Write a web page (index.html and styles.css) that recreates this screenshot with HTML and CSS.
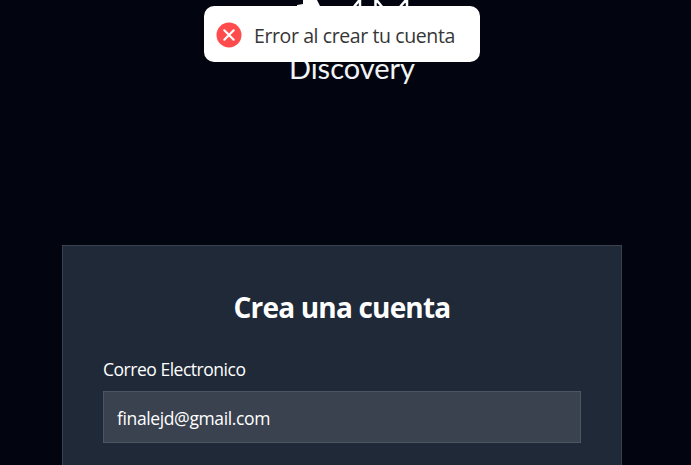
FILE: index.html
```html
<!DOCTYPE html>
<html lang="es">
<head>
<meta charset="utf-8">
<title>Crea una cuenta</title>
<link rel="stylesheet" href="styles.css">
</head>
<body>
<header class="brand">
  <svg class="mark" width="130" height="8" viewBox="0 0 130 8" aria-hidden="true">
    <path d="M12 8V5L18 4V0H32L36 8Z" fill="#fff"/>
    <path d="M68 8L74.500 0M75 0V8M90.500 8V0M91.500 0L98 8M114 8L121 0M122 0V8" fill="none" stroke="#fff" stroke-width="2.500"/>
  </svg>
  <span class="brand-name">Discovery</span>
</header>
<main class="card">
  <h1 class="title">Crea una cuenta</h1>
  <label class="label" for="email">Correo Electronico</label>
  <input class="field" id="email" type="email" value="finalejd@gmail.com">
</main>
<div class="toast" role="alert">
  <svg class="toast-icon" width="26" height="26" viewBox="0 0 26 26" aria-hidden="true">
    <circle cx="13" cy="13" r="12.500" fill="#ff4b4b"/>
    <path d="M8.300 8.300L17.700 17.700M17.700 8.300L8.300 17.700" stroke="#fff" stroke-width="2.200" stroke-linecap="round"/>
  </svg>
  <span class="toast-text">Error al crear tu cuenta</span>
</div>
</body>
</html>
```

FILE: styles.css
```css
* { box-sizing: border-box; }
body {
  margin: 0;
  height: 465px;
  overflow: hidden;
  background: #02050f;
  color: #fff;
  font-family: "Open Sans", "Noto Sans", sans-serif;
}
.brand {
  height: 245px;
  display: flex;
  flex-direction: column;
  align-items: flex-start;
  padding-left: 285px;
}
.mark { display: block; }
.brand-name {
  margin: 40px 0 0 4px;
  font: 29px/40px Lato, sans-serif;
  letter-spacing: -0.05px;
  color: #f1f3f7;
}
.card {
  width: 560px;
  height: 220px;
  margin-left: 62px;
  padding: 40px 40px 0;
  background: #202938;
  border: 1px solid #39434f;
  border-bottom: 0;
}
.title {
  margin: 0;
  text-align: center;
  font-size: 28px;
  line-height: 42px;
  font-weight: 700;
  letter-spacing: -0.82px;
}
.label {
  display: block;
  margin-top: 28px;
  font-size: 17.5px;
  line-height: 27px;
  letter-spacing: -0.48px;
}
.field {
  display: block;
  width: 478px;
  height: 52px;
  margin-top: 8px;
  padding: 2px 13px 0;
  border: 1px solid #4c5562;
  border-radius: 0;
  outline: 0;
  background: #3a4250;
  color: #fff;
  font: 17.5px "Open Sans", "Noto Sans", sans-serif;
  letter-spacing: -0.38px;
}
.toast {
  position: absolute;
  left: 204px;
  top: 6px;
  width: 276px;
  height: 56px;
  display: flex;
  align-items: center;
  padding-left: 12px;
  border-radius: 10px;
  background: #fff;
  color: #363636;
}
.toast-icon { margin-top: 1px; }
.toast-text {
  margin: 4px 0 0 12px;
  font-size: 19.5px;
  line-height: 28px;
  white-space: nowrap;
  letter-spacing: -0.4px;
}
```
